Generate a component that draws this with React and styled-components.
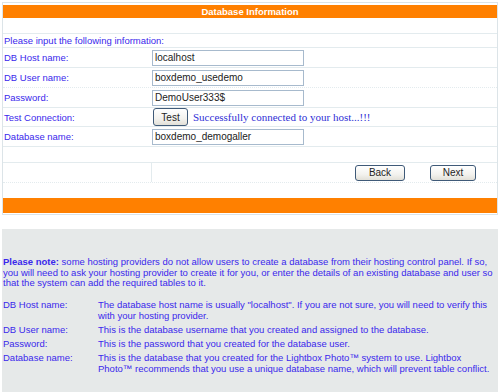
import React from 'react'
import styled, { createGlobalStyle } from 'styled-components'

const Global = createGlobalStyle`
  html, body {
    margin: 0;
    padding: 0;
    background: #fff;
  }
  body {
    font-family: "Liberation Sans", Arial, sans-serif;
    font-size: 9.5px;
  }
`

const Page = styled.div`
  padding: 2px 0 0 2px;
  width: 498px;
`

const Panel = styled.div`
  width: 496px;
  box-sizing: border-box;
  border: 1px solid #dce4e8;
  padding: 1px 0 1px;
`

const Banner = styled.div`
  height: ${p => p.$h || 13}px;
  line-height: ${p => p.$h || 13}px;
  background: #ff8000;
  color: #fff;
  font-weight: bold;
  text-align: center;
  font-size: 9.5px;
`

const Row = styled.div`
  display: grid;
  grid-template-columns: 149px 1fr;
  align-items: center;
  height: ${p => p.$h}px;
  box-sizing: border-box;
  border-bottom: ${p => (p.$line === 'none' ? '0' : `1px ${p.$line || 'solid'} #e3ebee`)};
`

const Label = styled.div`
  color: #3a28ec;
  padding-left: 1px;
  white-space: nowrap;
  align-self: stretch;
  display: flex;
  align-items: center;
  border-right: ${p => (p.$divider ? '1px solid #e3ebee' : '0')};
`

const Cell = styled.div`
  display: flex;
  align-items: center;
  justify-content: ${p => (p.$end ? 'flex-end' : 'flex-start')};
  padding-right: ${p => (p.$end ? '21px' : '0')};
  gap: ${p => p.$gap || 0}px;
`

const Input = styled.input`
  width: 152px;
  height: 16px;
  box-sizing: border-box;
  margin: 0;
  border: 1px solid #a7bacd;
  padding: 0 2px;
  font-family: "Liberation Sans", Arial, sans-serif;
  font-size: 10px;
  color: #222;
  outline: none;
`

const Button = styled.button`
  width: ${p => p.$w}px;
  height: ${p => p.$h || 16}px;
  margin: 0 0 0 ${p => p.$ml || 0}px;
  padding: 0;
  box-sizing: border-box;
  border: 1px solid #3f5a78;
  border-radius: 3px;
  background: linear-gradient(#ffffff, #f3f2ee 60%, #e2e0d8);
  font-family: "Liberation Sans", Arial, sans-serif;
  font-size: 10px;
  color: #1e1e1e;
`

const Status = styled.span`
  font-family: "Liberation Serif", "Times New Roman", serif;
  font-size: 11px;
  color: #2f2fd6;
  margin-left: 5px;
  white-space: nowrap;
`

const Notes = styled.div`
  margin-top: 14px;
  width: 496px;
  min-height: 170px;
  box-sizing: border-box;
  background: #e6e9e9;
  padding: 28px 0 20px 1px;
  color: #3a28ec;
  font-size: 9.5px;
`

const Para = styled.p`
  margin: 0;
  line-height: 10.6px;
  white-space: nowrap;
`

const NoteGrid = styled.div`
  margin-top: 10px;
  display: grid;
  grid-template-columns: 95px 1fr;
  row-gap: 3px;
  line-height: 11px;
  white-space: nowrap;
`

const fields = [
  { label: 'DB Host name:', value: 'localhost' },
  { label: 'DB User name:', value: 'boxdemo_usedemo', line: 'dotted' },
  { label: 'Password:', value: 'DemoUser333$' },
]

const notes = [
  ['DB Host name:', <>The database host name is usually &quot;localhost&quot;. If you are not sure, you will need to verify this<br />with your hosting provider.</>],
  ['DB User name:', 'This is the database username that you created and assigned to the database.'],
  ['Password:', 'This is the password that you created for the database user.'],
  ['Database name:', <>This is the database that you created for the Lightbox Photo™ system to use. Lightbox<br />Photo™ recommends that you use a unique database name, which will prevent table conflict.</>],
]

export default function App() {
  return (
    <Page>
      <Global />
      <Panel>
        <Banner style={{ marginTop: 1 }}>Database Information</Banner>
        <Row $h={16} />
        <Row $h={14}>
          <Label>Please input the following information:</Label>
        </Row>
        {fields.map(f => (
          <Row key={f.label} $h={20} $line={f.line}>
            <Label>{f.label}</Label>
            <Cell><Input defaultValue={f.value} /></Cell>
          </Row>
        ))}
        <Row $h={19}>
          <Label>Test Connection:</Label>
          <Cell>
            <Button $w={35} $h={18} $ml={1}>Test</Button>
            <Status>Successfully connected to your host...!!!</Status>
          </Cell>
        </Row>
        <Row $h={20}>
          <Label>Database name:</Label>
          <Cell><Input defaultValue="boxdemo_demogaller" /></Cell>
        </Row>
        <Row $h={16} />
        <Row $h={20} $line="dotted">
          <Label $divider />
          <Cell $end $gap={25}>
            <Button $w={50}>Back</Button>
            <Button $w={46}>Next</Button>
          </Cell>
        </Row>
        <Row $h={15} $line="none" />
        <Banner $h={15} />
      </Panel>
      <Notes>
        <Para>
          <b>Please note:</b> some hosting providers do not allow users to create a database from their hosting control panel. If so,<br />
          you will need to ask your hosting provider to create it for you, or enter the details of an existing database and user so<br />
          that the system can add the required tables to it.
        </Para>
        <NoteGrid>
          {notes.map(([k, v]) => (
            <React.Fragment key={k}>
              <div>{k}</div>
              <div>{v}</div>
            </React.Fragment>
          ))}
        </NoteGrid>
      </Notes>
    </Page>
  )
}
